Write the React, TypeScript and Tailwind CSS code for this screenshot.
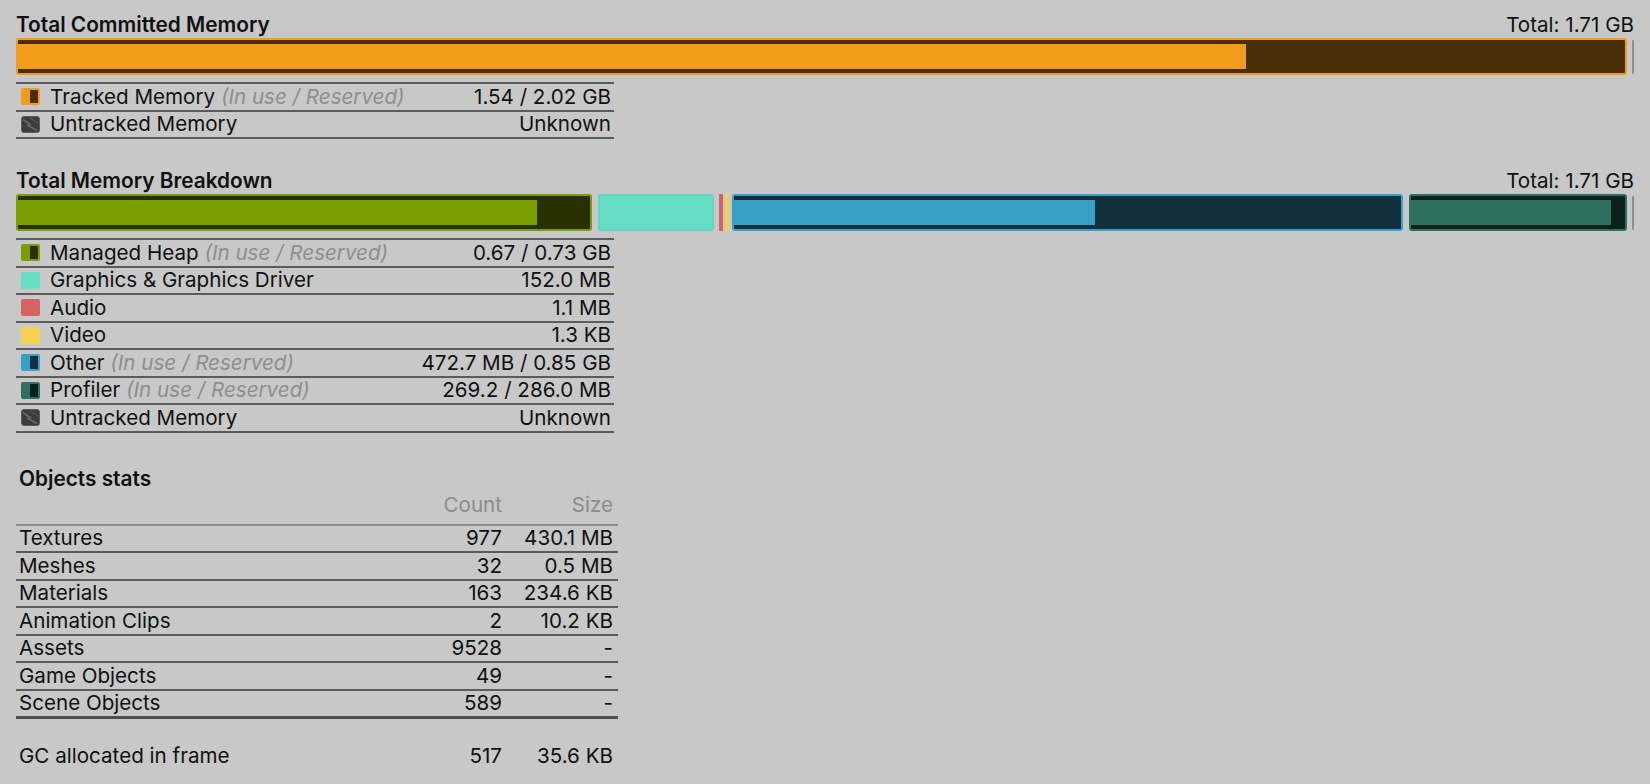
type Part = {
  outer: string
  border: string
  fill?: string
  fillWidth?: string
  className: string
}

function UsageBar({ parts, marker }: { parts: Part[]; marker: string }) {
  return (
    <div className="mt-[1px] flex items-center">
      <div className="flex flex-1 items-stretch">
        {parts.map((p, i) => (
          <div
            key={i}
            className={`h-[37px] rounded-[3px] border-2 ${p.outer} ${p.border} ${p.className} ${
              p.fill ? 'py-[4px]' : ''
            }`}
          >
            {p.fill && <div className={`h-full ${p.fill} ${p.fillWidth}`}></div>}
          </div>
        ))}
      </div>
      <div className={`ml-[5px] w-[2px] ${marker} rounded-full bg-[#8e8e8e]`}></div>
    </div>
  )
}

function SplitIcon({ light, dark }: { light: string; dark: string }) {
  return (
    <div className={`flex h-[17px] w-[19px] justify-end rounded-[2px] p-[2px] ${light}`}>
      <div className={`h-full w-[8px] ${dark}`}></div>
    </div>
  )
}

function SolidIcon({ color }: { color: string }) {
  return <div className={`h-[17px] w-[19px] rounded-[2px] ${color}`}></div>
}

function UntrackedIcon() {
  return (
    <svg width="19" height="17" viewBox="0 0 19 17">
      <rect x="0.5" y="0.5" width="18" height="16" rx="2.5" fill="#3c3c3c" stroke="#5c5c5c" />
      <path d="M2 3.5 L10 9" stroke="#6a6a6a" strokeWidth="1.6" />
      <path d="M6 9 L16 14.5" stroke="#6a6a6a" strokeWidth="1.6" />
      <path d="M9 2 L17 7" stroke="#555555" strokeWidth="1.4" />
    </svg>
  )
}

function LegendRow({
  icon,
  name,
  note,
  value,
}: {
  icon: React.ReactNode
  name: string
  note?: boolean
  value: string
}) {
  return (
    <div className="flex h-[27.5px] items-center border-b-2 border-[#5b5b5b] pl-[5px] pr-[3px]">
      {icon}
      <span className="ml-[10px] flex-1 whitespace-nowrap">
        {name}
        {note && <span className="italic text-[#8e8e8e]"> (In use / Reserved)</span>}
      </span>
      <span className="whitespace-nowrap">{value}</span>
    </div>
  )
}

function SectionTitle({ title, total }: { title: string; total: string }) {
  return (
    <div className="flex h-[24px] items-center justify-between">
      <span className="text-[20.8px] font-semibold">{title}</span>
      <span>{total}</span>
    </div>
  )
}

const stats = [
  ['Textures', '977', '430.1 MB'],
  ['Meshes', '32', '0.5 MB'],
  ['Materials', '163', '234.6 KB'],
  ['Animation Clips', '2', '10.2 KB'],
  ['Assets', '9528', '-'],
  ['Game Objects', '49', '-'],
  ['Scene Objects', '589', '-'],
]

export default function App() {
  return (
    <div className="h-[784px] w-full overflow-hidden bg-[#c8c8c8] px-4 pt-[13px] font-[family-name:Inter,sans-serif] text-[20.6px] leading-[24px] text-[#111111]">
      {/* committed memory */}
      <SectionTitle title="Total Committed Memory" total="Total: 1.71 GB" />
      <UsageBar
        marker="h-[34px]"
        parts={[
          {
            outer: 'bg-[#4a2e08]',
            border: 'border-[#f39c1c]',
            fill: 'bg-[#f39c1c]',
            fillWidth: 'w-[76.4%]',
            className: 'flex-1',
          },
        ]}
      />
      <div className="mt-[7px] w-[598px] border-t-2 border-[#5b5b5b]">
        <LegendRow
          icon={<SplitIcon light="bg-[#f39c1c]" dark="bg-[#4a2e08]" />}
          name="Tracked Memory"
          note
          value="1.54 / 2.02 GB"
        />
        <LegendRow icon={<UntrackedIcon />} name="Untracked Memory" value="Unknown" />
      </div>

      {/* breakdown */}
      <div className="mt-[30px]">
        <SectionTitle title="Total Memory Breakdown" total="Total: 1.71 GB" />
      </div>
      <UsageBar
        marker="h-[34px]"
        parts={[
          {
            outer: 'bg-[#283000]',
            border: 'border-[#7a9e00]',
            fill: 'bg-[#7a9e00]',
            fillWidth: 'w-[90.8%]',
            className: 'w-[576px]',
          },
          {
            outer: 'bg-[#66dec6]',
            border: 'border-[#62d6be]',
            className: 'ml-[6px] w-[116px]',
          },
          {
            outer: 'bg-[#d46464]',
            border: 'border-[#d46464]',
            className: 'ml-[5px] w-[3px] rounded-none border-0',
          },
          {
            outer: 'bg-[#f2d24e]',
            border: 'border-[#f2d24e]',
            className: 'ml-[2px] w-[3px] rounded-none border-0',
          },
          {
            outer: 'bg-[#10303e]',
            border: 'border-[#37a1c9]',
            fill: 'bg-[#37a1c9]',
            fillWidth: 'w-[54.1%]',
            className: 'ml-[3px] w-[671px]',
          },
          {
            outer: 'bg-[#0e201c]',
            border: 'border-[#2e7062]',
            fill: 'bg-[#2e7062]',
            fillWidth: 'w-[93.5%]',
            className: 'ml-[6px] flex-1',
          },
        ]}
      />
      <div className="mt-[7px] w-[598px] border-t-2 border-[#5b5b5b]">
        <LegendRow
          icon={<SplitIcon light="bg-[#7a9e00]" dark="bg-[#283000]" />}
          name="Managed Heap"
          note
          value="0.67 / 0.73 GB"
        />
        <LegendRow icon={<SolidIcon color="bg-[#66dec6]" />} name="Graphics & Graphics Driver" value="152.0 MB" />
        <LegendRow icon={<SolidIcon color="bg-[#d46464]" />} name="Audio" value="1.1 MB" />
        <LegendRow icon={<SolidIcon color="bg-[#f2d24e]" />} name="Video" value="1.3 KB" />
        <LegendRow
          icon={<SplitIcon light="bg-[#37a1c9]" dark="bg-[#10303e]" />}
          name="Other"
          note
          value="472.7 MB / 0.85 GB"
        />
        <LegendRow
          icon={<SplitIcon light="bg-[#2e7062]" dark="bg-[#0e201c]" />}
          name="Profiler"
          note
          value="269.2 / 286.0 MB"
        />
        <LegendRow icon={<UntrackedIcon />} name="Untracked Memory" value="Unknown" />
      </div>

      {/* objects stats */}
      <div className="mt-[34px] w-[602px]">
        <div className="h-[24px] pl-[3px] text-[20.8px] font-semibold">Objects stats</div>
        <div className="flex h-[35px] items-start border-b-2 border-[#8a8a8a] pr-[5px] pt-[2px] text-[#8c8c8c]">
          <span className="flex-1"></span>
          <span className="w-[100px] text-right">Count</span>
          <span className="w-[111px] text-right">Size</span>
        </div>
        {stats.map(([name, count, size], i) => (
          <div
            key={name}
            className={`flex items-center pl-[3px] pr-[5px] ${
              i === stats.length - 1
                ? 'h-[28px] border-b-[3px] border-[#4e4e4e]'
                : 'h-[27.5px] border-b-2 border-[#5b5b5b]'
            }`}
          >
            <span className="flex-1">{name}</span>
            <span className="w-[100px] text-right">{count}</span>
            <span className="w-[111px] text-right">{size}</span>
          </div>
        ))}
        <div className="mt-[24px] flex h-[27.5px] items-center pl-[3px] pr-[5px]">
          <span className="flex-1">GC allocated in frame</span>
          <span className="w-[100px] text-right">517</span>
          <span className="w-[111px] text-right">35.6 KB</span>
        </div>
      </div>
    </div>
  )
}
